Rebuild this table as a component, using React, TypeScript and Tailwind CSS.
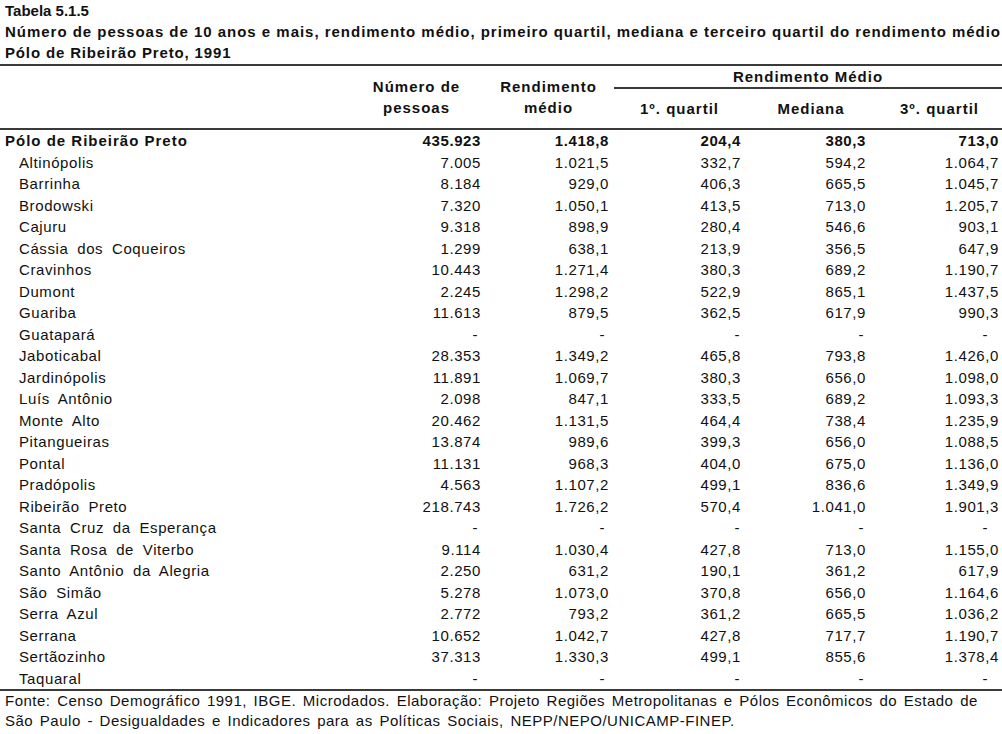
type Row = { name: string; v: string[]; bold?: boolean };

const rows: Row[] = [
  { name: "Pólo de Ribeirão Preto", v: ["435.923", "1.418,8", "204,4", "380,3", "713,0"], bold: true },
  { name: "Altinópolis", v: ["7.005", "1.021,5", "332,7", "594,2", "1.064,7"] },
  { name: "Barrinha", v: ["8.184", "929,0", "406,3", "665,5", "1.045,7"] },
  { name: "Brodowski", v: ["7.320", "1.050,1", "413,5", "713,0", "1.205,7"] },
  { name: "Cajuru", v: ["9.318", "898,9", "280,4", "546,6", "903,1"] },
  { name: "Cássia dos Coqueiros", v: ["1.299", "638,1", "213,9", "356,5", "647,9"] },
  { name: "Cravinhos", v: ["10.443", "1.271,4", "380,3", "689,2", "1.190,7"] },
  { name: "Dumont", v: ["2.245", "1.298,2", "522,9", "865,1", "1.437,5"] },
  { name: "Guariba", v: ["11.613", "879,5", "362,5", "617,9", "990,3"] },
  { name: "Guatapará", v: ["-", "-", "-", "-", "-"] },
  { name: "Jaboticabal", v: ["28.353", "1.349,2", "465,8", "793,8", "1.426,0"] },
  { name: "Jardinópolis", v: ["11.891", "1.069,7", "380,3", "656,0", "1.098,0"] },
  { name: "Luís Antônio", v: ["2.098", "847,1", "333,5", "689,2", "1.093,3"] },
  { name: "Monte Alto", v: ["20.462", "1.131,5", "464,4", "738,4", "1.235,9"] },
  { name: "Pitangueiras", v: ["13.874", "989,6", "399,3", "656,0", "1.088,5"] },
  { name: "Pontal", v: ["11.131", "968,3", "404,0", "675,0", "1.136,0"] },
  { name: "Pradópolis", v: ["4.563", "1.107,2", "499,1", "836,6", "1.349,9"] },
  { name: "Ribeirão Preto", v: ["218.743", "1.726,2", "570,4", "1.041,0", "1.901,3"] },
  { name: "Santa Cruz da Esperança", v: ["-", "-", "-", "-", "-"] },
  { name: "Santa Rosa de Viterbo", v: ["9.114", "1.030,4", "427,8", "713,0", "1.155,0"] },
  { name: "Santo Antônio da Alegria", v: ["2.250", "631,2", "190,1", "361,2", "617,9"] },
  { name: "São Simão", v: ["5.278", "1.073,0", "370,8", "656,0", "1.164,6"] },
  { name: "Serra Azul", v: ["2.772", "793,2", "361,2", "665,5", "1.036,2"] },
  { name: "Serrana", v: ["10.652", "1.042,7", "427,8", "717,7", "1.190,7"] },
  { name: "Sertãozinho", v: ["37.313", "1.330,3", "499,1", "855,6", "1.378,4"] },
  { name: "Taquaral", v: ["-", "-", "-", "-", "-"] },
];

// right padding for numbers / dashes, per column
const numPad = ["pr-[2px]", "pr-[5px]", "pr-[4px]", "pr-[11px]", "pr-[3px]"];
const dashPad = ["pr-[5px]", "pr-[9px]", "pr-[5px]", "pr-[13px]", "pr-[14px]"];

const cols = "grid grid-cols-[350px_133px_131px_131px_132px_125px]";

export default function App() {
  return (
    <div className="w-[1002px] h-[734px] bg-white text-[#111] font-['Liberation_Sans',Arial,sans-serif] overflow-hidden">
      <div className="pl-[5px] font-bold text-[15px] leading-[21px] h-[64px]">
        <div>Tabela 5.1.5</div>
        <div className="tracking-[0.98px]">
          Número de pessoas de 10 anos e mais, rendimento médio, primeiro quartil, mediana e terceiro quartil do rendimento médio
        </div>
        <div className="tracking-[0.85px]">Pólo de Ribeirão Preto, 1991</div>
      </div>
      <div className="h-[2px] bg-[#3a3a3a]" />

      <div className={`${cols} h-[62px] font-bold text-[15px] leading-[21px] tracking-[1px]`}>
        <div />
        <div className="flex flex-col items-center justify-center">
          <span>Número de</span>
          <span>pessoas</span>
        </div>
        <div className="flex flex-col items-center justify-center">
          <span>Rendimento</span>
          <span>médio</span>
        </div>
        <div className="col-span-3 flex flex-col">
          <div className="h-[21px] text-center">Rendimento Médio</div>
          <div className="h-[2px] bg-[#3a3a3a]" />
          <div className="flex-1 grid grid-cols-[131px_132px_125px] items-center text-center">
            <span>1º. quartil</span>
            <span>Mediana</span>
            <span>3º. quartil</span>
          </div>
        </div>
      </div>
      <div className="h-[2px] bg-[#3a3a3a]" />

      <div className="text-[15px] tracking-[0.6px]">
        {rows.map((r) => (
          <div key={r.name} className={`${cols} h-[21.5px] items-center ${r.bold ? "font-bold" : ""}`}>
            <div className={r.bold ? "pl-[5px] tracking-[1px]" : "pl-[19px] [word-spacing:4px]"}>{r.name}</div>
            {r.v.map((x, i) => (
              <div key={i} className={`text-right ${x === "-" ? dashPad[i] : numPad[i]}`}>
                {x}
              </div>
            ))}
          </div>
        ))}
      </div>
      <div className="h-[2px] bg-[#3a3a3a]" />

      <div className="pl-[5px] text-[15px] leading-[20px] tracking-[0.5px] [word-spacing:2px]">
        <div>
          Fonte: Censo Demográfico 1991, IBGE. Microdados. Elaboração: Projeto Regiões Metropolitanas e Pólos Econômicos do Estado de
        </div>
        <div>São Paulo - Desigualdades e Indicadores para as Políticas Sociais, NEPP/NEPO/UNICAMP-FINEP.</div>
      </div>
    </div>
  );
}
